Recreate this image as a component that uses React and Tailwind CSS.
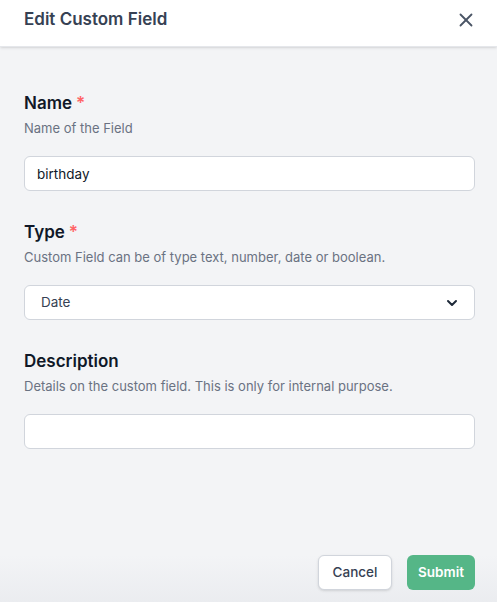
import { X, ChevronDown } from 'lucide-react';

const Field = ({ label, required, hint, children }) => (
  <div>
    <div className="text-[17px] leading-[28px] font-semibold text-gray-900">
      {label}
      {required && <span className="ml-1 text-red-400">*</span>}
    </div>
    <p className="mt-px text-[13px] leading-[20px] text-gray-500">{hint}</p>
    <div className="mt-[18px]">{children}</div>
  </div>
);

const App = () => {
  return (
    <div className="flex h-screen flex-col bg-gray-100" style={{ fontFamily: 'Inter, "Noto Sans", sans-serif' }}>
      <div className="flex h-[47px] shrink-0 items-center justify-between border-b border-gray-200 bg-white pb-[6px] pl-6 pr-5 shadow-sm">
        <h2 className="text-[17px] font-semibold text-gray-700">Edit Custom Field</h2>
        <X className="h-[22px] w-[22px] text-gray-600" strokeWidth={2} />
      </div>

      <div className="flex flex-col gap-[27px] pl-6 pr-[22px] pt-[42px]">
        <Field label="Name" required hint="Name of the Field">
          <input
            defaultValue="birthday"
            className="h-[35px] w-full rounded-md border border-gray-300 bg-white px-3 text-[13.5px] text-gray-900 outline-none"
          />
        </Field>
        <Field label="Type" required hint="Custom Field can be of type text, number, date or boolean.">
          <div className="flex h-[35px] w-full items-center justify-between rounded-md border border-gray-300 bg-white pl-4 pr-[14px] text-[13.5px] text-gray-700">
            <span>Date</span>
            <ChevronDown className="h-4 w-4 text-gray-800" strokeWidth={3} />
          </div>
        </Field>
        <Field label="Description" hint="Details on the custom field. This is only for internal purpose.">
          <input className="h-[35px] w-full rounded-md border border-gray-300 bg-white px-3 text-[13.5px] outline-none" />
        </Field>
      </div>

      <div className="mt-auto flex justify-end gap-[15px] bg-gradient-to-b from-gray-100 to-gray-200/60 pb-3 pr-[22px]">
        <button className="h-[35px] w-[74px] rounded-md border border-gray-300 bg-white text-[13.5px] font-medium text-gray-700 shadow-sm">
          Cancel
        </button>
        <button className="h-[35px] w-[68px] rounded-md bg-[#55b687] text-[13.5px] font-semibold text-white">
          Submit
        </button>
      </div>
    </div>
  );
};

export default App;
